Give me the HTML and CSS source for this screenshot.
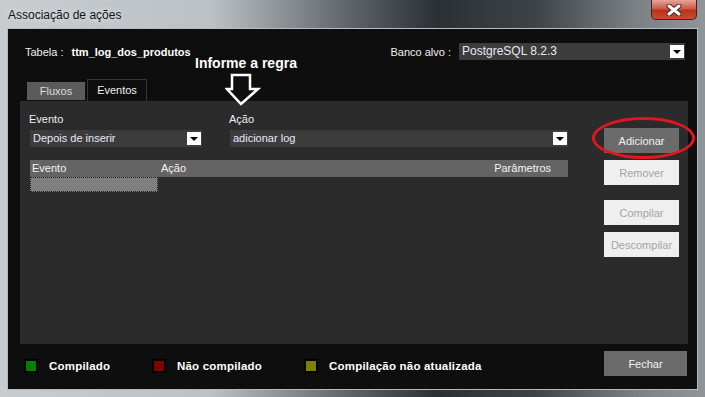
FILE: index.html
```html
<!DOCTYPE html>
<html lang="pt">
<head>
  <meta charset="UTF-8" />
  <title>Associação de ações</title>
  <link rel="stylesheet" href="styles.css">
</head>
<body>
  <div class="window">
    <div class="titlebar">
      <span class="title">Associação de ações</span>
      <span class="close">
        <svg width="16" height="12" viewBox="0 0 16 12"><path d="M3 2 L13 10 M13 2 L3 10" stroke="#3a2a28" stroke-width="5" stroke-linecap="round"/><path d="M3 2 L13 10 M13 2 L3 10" stroke="#fff" stroke-width="3" stroke-linecap="round"/></svg>
      </span>
    </div>
    <div class="client">
      <div class="top-row">
        <div class="field"><span>Tabela :</span><b>ttm_log_dos_produtos</b></div>
        <div class="field"><span>Banco alvo :</span><div class="combo combo-db">PostgreSQL 8.2.3<span class="drop"></span></div></div>
      </div>
      <div class="tabs">
        <span class="tab">Fluxos</span>
        <span class="tab active">Eventos</span>
      </div>
      <div class="panel">
        <div class="rules">
          <div class="selects">
            <div class="col col-event">
              <label>Evento</label>
              <div class="combo">Depois de inserir<span class="drop"></span></div>
            </div>
            <div class="col col-action">
              <label>Ação</label>
              <div class="combo">adicionar log<span class="drop"></span></div>
            </div>
          </div>
          <div class="list">
            <div class="list-head"><span>Evento</span><span>Ação</span><span class="params">Parâmetros</span></div>
            <div class="list-row"><span class="sel"></span></div>
          </div>
        </div>
        <div class="actions">
          <button class="btn">Adicionar</button>
          <button class="btn off">Remover</button>
          <button class="btn off gap">Compilar</button>
          <button class="btn off">Descompilar</button>
        </div>
      </div>
      <div class="footer">
        <div class="legend legend-ok"><span class="sq green"></span>Compilado</div>
        <div class="legend legend-no"><span class="sq red"></span>Não compilado</div>
        <div class="legend"><span class="sq olive"></span>Compilação não atualizada</div>
        <button class="btn close-btn">Fechar</button>
      </div>
    </div>

    <!-- annotation -->
    <div class="hint">Informe a regra</div>
    <svg class="arrow" width="36" height="33" viewBox="0 0 36 33"><path d="M7 2 H25 V16 H33 L16 31 L2 16 H7 Z" fill="none" stroke="#fff" stroke-width="2.5" stroke-linejoin="miter"/></svg>
    <div class="ring"></div>
  </div>
</body>
</html>
```

FILE: styles.css
```css
body { margin: 0; background: #000; font-family: "Liberation Sans", Arial, sans-serif; font-size: 11px; color: #f0f0f0; }
.window { position: relative; width: 705px; height: 397px; box-sizing: border-box; padding: 0 7px 7px; display: flex; flex-direction: column; background: linear-gradient(90deg, #c7ccd0 0, #bcc1c5 30%, #5c6267 50%, #2b3035 62%, #3e4348 76%, #7b8085 90%, #90959a 100%); }
.titlebar { height: 28px; display: flex; justify-content: space-between; align-items: flex-start; }
.title { font-size: 12px; color: #111; margin: 8px 0 0 1px; text-shadow: 0 0 6px rgba(255,255,255,0.8); }
.close { width: 46px; height: 20px; margin-right: 1px; box-sizing: border-box; border: 1px solid #47211b; border-top: none; border-radius: 0 0 5px 5px; background: linear-gradient(#e6a598 0, #cf5a44 45%, #b8311c 55%, #d0492f 100%); display: flex; align-items: center; justify-content: center; }
.client { flex: 1; background: #0e0e0e; border: 1px solid #b5babe; display: flex; flex-direction: column; }
.top-row { display: flex; justify-content: space-between; align-items: center; height: 17px; margin: 14px 12px 0 17px; }
.field { display: flex; align-items: center; gap: 8px; }
.field b { color: #fff; }
.combo { position: relative; height: 17px; line-height: 17px; background: #3c3c3c; color: #e8e8f8; padding-left: 3px; box-sizing: border-box; }
.combo-db { width: 226px; font-size: 12px; }
.drop { position: absolute; right: 1px; top: 2px; width: 14px; height: 13px; background: #fff; }
.drop::after { content: ""; position: absolute; left: 3px; top: 5px; border-left: 4px solid transparent; border-right: 4px solid transparent; border-top: 4px solid #000; }
.tabs { display: flex; align-items: flex-end; gap: 2px; height: 22px; margin: 19px 0 0 19px; }
.tab { width: 58px; height: 18px; line-height: 18px; margin-bottom: 1px; text-align: center; background: #5b5b5b; color: #ddd; }
.tab.active { width: 60px; height: 22px; line-height: 21px; margin-bottom: 0; background: #0e0e0e; color: #f0f0f0; box-sizing: border-box; border: 1px solid #353535; border-bottom: none; }
.panel { height: 243px; margin: 0 9px 0 12px; padding: 11px 0 0 10px; box-sizing: border-box; background: #2b2b2b; display: flex; gap: 36px; }
.rules { width: 538px; }
.selects { display: flex; gap: 28px; }
.col label { display: block; height: 13px; line-height: 13px; margin: 1px 0 4px -1px; }
.col-event { width: 172px; }
.col-action { width: 338px; }
.list { margin-top: 13px; }
.list-head { display: grid; grid-template-columns: 129px 1fr auto; height: 17px; line-height: 17px; background: #646464; color: #f4f4f4; padding-left: 2px; }
.list-head .params { padding-right: 17px; }
.list-row { height: 15px; }
.sel { display: block; width: 128px; height: 15px; box-sizing: border-box; background: #7f7f7f; border: 1px dotted #1e1e1e; }
.actions { display: flex; flex-direction: column; gap: 7px; margin-top: 16px; }
.btn { width: 75px; height: 25px; border: none; padding: 0; font-family: inherit; font-size: 11px; background: #6b6b6b; color: #f2f2f2; }
.btn.off { background: #efefef; color: #a4a4a4; }
.btn.gap { margin-top: 8px; }
.footer { display: flex; align-items: flex-start; height: 25px; margin: 7px 10px 0 16px; }
.legend { display: flex; align-items: center; gap: 11px; margin-top: 8px; font-size: 11.5px; font-weight: bold; color: #fff; letter-spacing: 0.2px; }
.legend-ok { width: 128px; }
.legend-no { width: 152px; }
.sq { width: 14px; height: 14px; box-sizing: border-box; border: 2px solid #000; }
.green { background: #008000; }
.red { background: #800000; }
.olive { background: #808000; }
.close-btn { width: 83px; margin-left: auto; }
.hint { position: absolute; left: 195px; top: 55px; font-size: 14px; font-weight: bold; color: #fff; }
.arrow { position: absolute; left: 225px; top: 73px; }
.ring { position: absolute; left: 592px; top: 117px; width: 103px; height: 42px; box-sizing: border-box; border: 3px solid #e3151f; border-radius: 50%; }
```
